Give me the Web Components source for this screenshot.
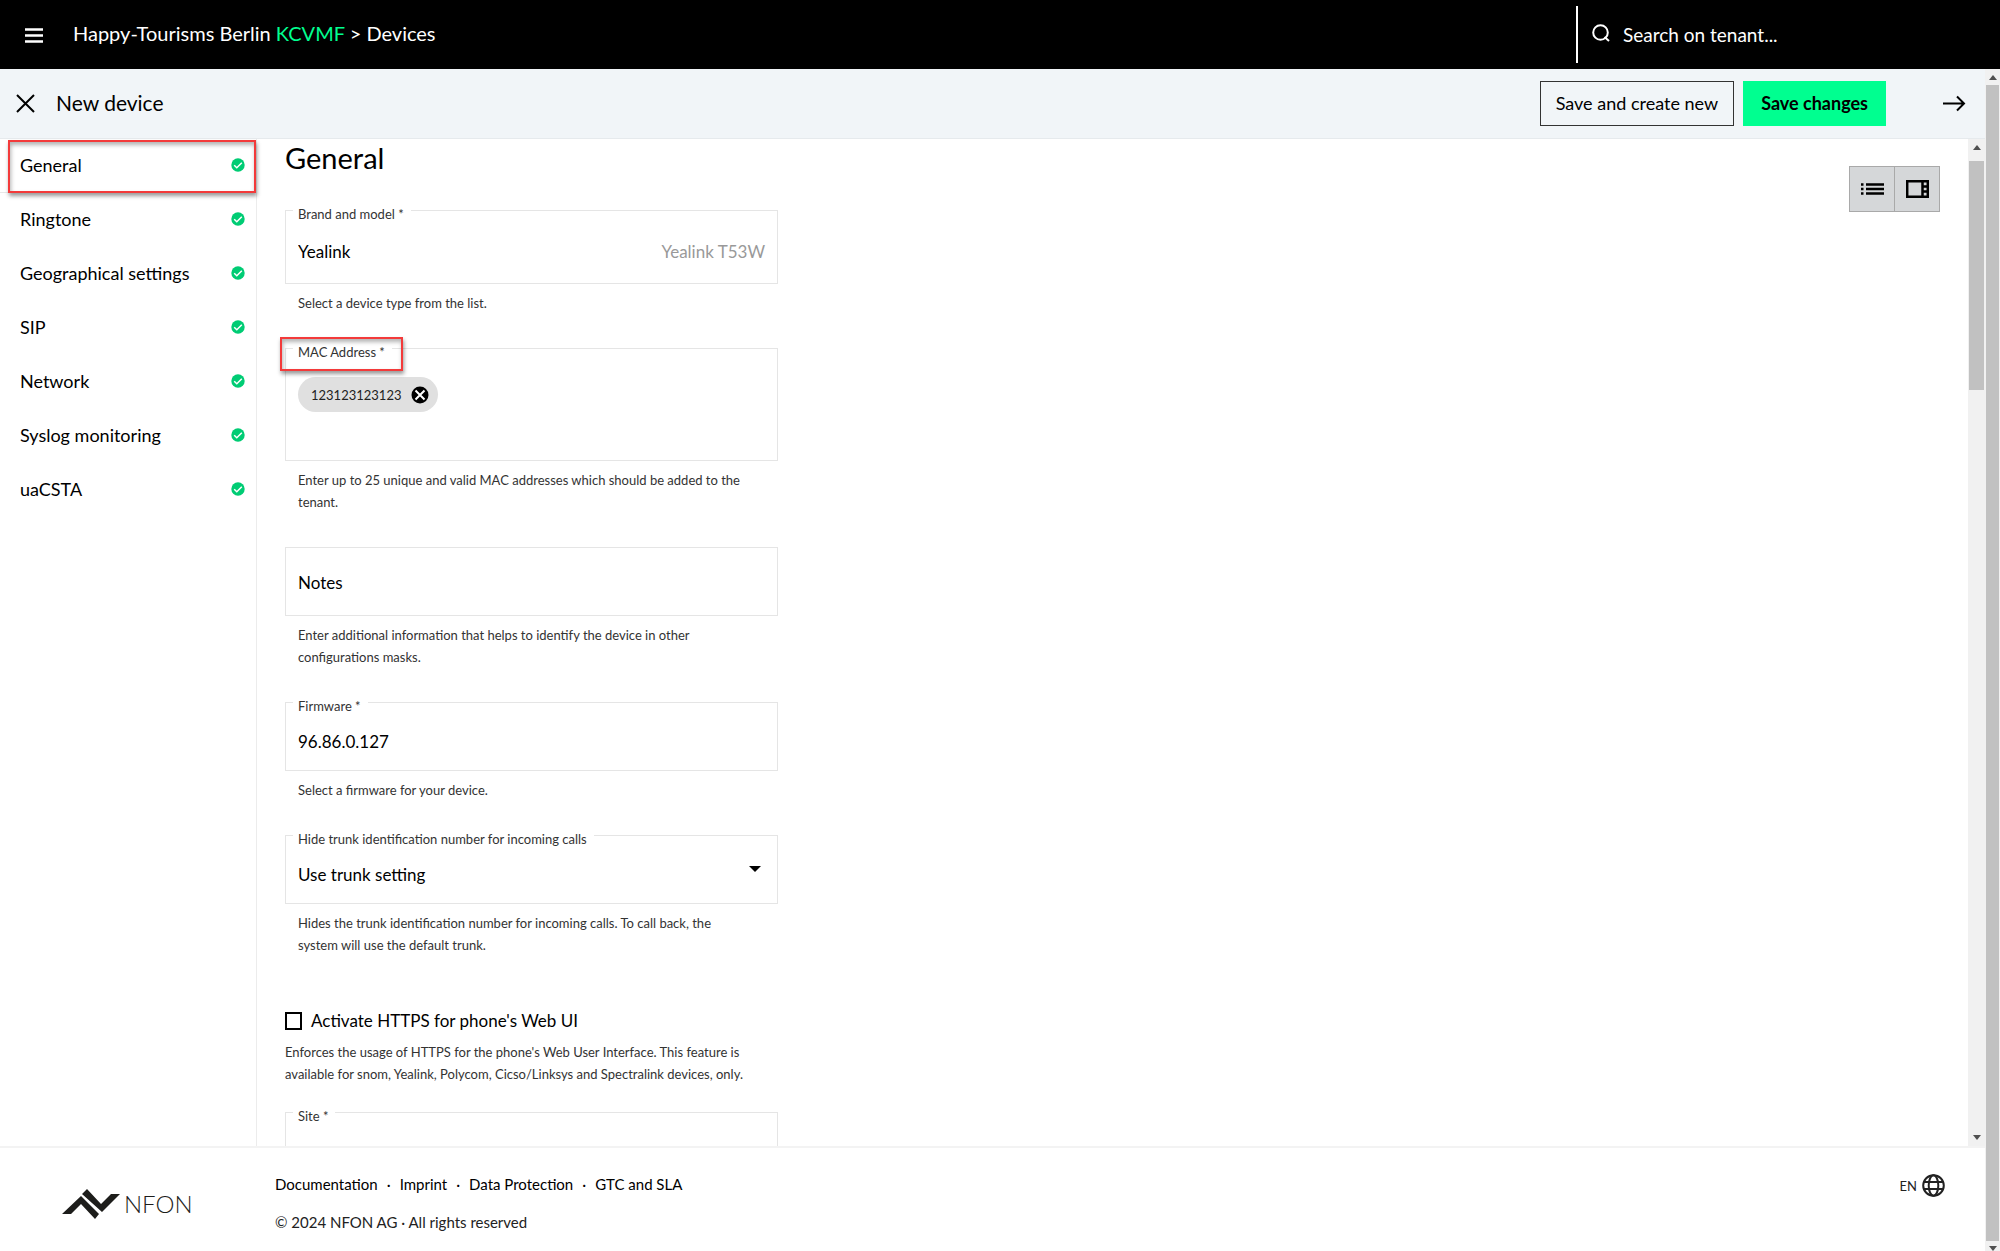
<!DOCTYPE html>
<html lang="en">
<head>
<meta charset="utf-8">
<title>New device</title>
<style>
    body {
        margin: 0;
        font-family: Lato, "Open Sans", sans-serif;
        font-size: 17px;
        color: #000;
        background: #fff;
    }
</style>
</head>
<body>
<device-page></device-page>

<script>
class BaseElement extends HTMLElement {
    constructor() {
        super();
        this.attachShadow({mode: 'open'});
    }

    connectedCallback() {
        this.shadowRoot.innerHTML = `
            <style>
                * { box-sizing: border-box; }
                button { font: inherit; color: inherit; background: none; border: 0; padding: 0; cursor: pointer; }
                a { color: inherit; text-decoration: none; }
                svg { display: block; flex: none; }
            </style>
            ${this.template()}`;
    }

    attr(name) {
        return this.getAttribute(name) || '';
    }
}

class TopBar extends BaseElement {
    template() {
        return `
            <style>
                :host { display: flex; align-items: center; height: 69px; background: #000; color: #fff; flex: none; }
                .menu { margin: 2px 30px 0 25px; }
                h1 { flex: 1; margin: 0; padding-bottom: 3px; font-size: 20px; font-weight: 400; line-height: 28px; }
                h1 span { color: #00ff90; }
                .search { display: flex; align-items: center; gap: 13px; width: 424px; height: 57px; padding-left: 14px; border-left: 2px solid #fff; }
                .search svg { margin-bottom: 3px; }
                input { flex: 1; min-width: 0; font: inherit; font-size: 19px; color: #fff; background: none; border: 0; padding: 0; outline: none; }
                input::placeholder { color: #fff; opacity: 1; }
            </style>
            <button class="menu" aria-label="Menu">
                <svg width="18" height="15" viewBox="0 0 18 15"><path d="M0 1.500h18M0 7.500h18M0 13.500h18" stroke="#fff" stroke-width="2.500"/></svg>
            </button>
            <h1>Happy-Tourisms Berlin <span>KCVMF</span> &gt; Devices</h1>
            <div class="search">
                <svg width="18" height="18" viewBox="0 0 18 18" fill="none" stroke="#fff" stroke-width="2"><circle cx="8.5" cy="8.5" r="7.3"/><path d="M12.500 13l4.500 4"/></svg>
                <input type="search" aria-label="Search on tenant" placeholder="Search on tenant...">
            </div>`;
    }
}

class DeviceToolbar extends BaseElement {
    template() {
        return `
            <style>
                :host { display: flex; align-items: center; height: 70px; padding: 0 19px 0 16px; background: #f1f5f8; border-bottom: 1px solid #e6eaed; flex: none; }
                h2 { flex: 1; margin: 0 0 0 21px; padding-bottom: 3px; font-size: 21px; font-weight: 400; }
                .action { height: 45px; padding: 0 18px 2px; font-size: 18px; }
                .outline { border: 1px solid #333; padding: 0 15px 2px; margin-right: 9px; }
                .primary { background: #00ff90; font-weight: 700; margin-right: 57px; }
            </style>
            <button aria-label="Close">
                <svg width="19" height="19" viewBox="0 0 19 19"><path d="M1 1l17 17M18 1L1 18" stroke="#000" stroke-width="2"/></svg>
            </button>
            <h2>New device</h2>
            <button class="action outline">Save and create new</button>
            <button class="action primary">Save changes</button>
            <button aria-label="Next">
                <svg width="23" height="17" viewBox="0 0 23 17" fill="none" stroke="#000" stroke-width="2"><path d="M0 8.5h21M14 1.5l7 7-7 7"/></svg>
            </button>`;
    }
}

class NavItem extends BaseElement {
    template() {
        return `
            <style>
                :host { display: block; position: relative; font-size: 18px; }
                a { display: flex; align-items: center; justify-content: space-between; height: 54px; padding: 0 11px 2px 20px; }
                :host([marked]) a { border-bottom: 1px solid #e8e8e8; }
                :host([marked])::after {
                    content: "";
                    position: absolute;
                    inset: 1px 0 0 8px;
                    border: 2px solid #f33a3a;
                    box-shadow: 1px 3px 4px rgba(0, 0, 0, .4), inset 1px 3px 4px rgba(0, 0, 0, .3);
                    pointer-events: none;
                }
            </style>
            <a href="#"><slot></slot>
                <svg width="14" height="14" viewBox="0 0 14 14"><circle cx="7" cy="7" r="6.7" fill="#00cc74"/><path d="M3.2 7.2l2.6 2.5 5-5" fill="none" stroke="#fff" stroke-width="1.5"/></svg>
            </a>`;
    }
}

class SideNav extends BaseElement {
    template() {
        return `
            <style>
                :host { display: block; width: 257px; border-right: 1px solid #ececec; flex: none; }
            </style>
            <nav><slot></slot></nav>`;
    }
}

class FormField extends BaseElement {
    template() {
        const marked = this.hasAttribute('marked') ? ' class="marked"' : '';
        const resting = this.hasAttribute('resting');
        return `
            <style>
                :host { display: block; }
                .box { position: relative; display: flex; align-items: center; min-height: var(--box-height, 69px); padding: var(--box-top, 10px) 12px 0 12px; border: 1px solid #e5e5e5; }
                .box.resting { padding-top: 2px; }
                .box.chips { flex-wrap: wrap; align-content: flex-start; padding-top: 28px; }
                label { position: absolute; top: -8px; left: 7px; padding: 0 7px 0 5px; background: #fff; font-size: 13px; line-height: 22px; color: #333; }
                .resting label { position: static; padding: 0; font-size: 17px; color: #000; }
                .marked::after {
                    content: "";
                    position: absolute;
                    inset: -4px -11px -8px -13px;
                    border: 2px solid #f33a3a;
                    box-shadow: 1px 3px 4px rgba(0, 0, 0, .4), inset 1px 3px 4px rgba(0, 0, 0, .3);
                    pointer-events: none;
                }
                input, select { flex: 1; min-width: 0; width: 100%; font: inherit; color: #000; background: none; border: 0; padding: 0; outline: none; appearance: none; }
                .chips input { flex: 1 0 100%; }
                .arrow { margin: -12px 4px 0 0; pointer-events: none; }
                p { margin: 8px 30px 0 13px; font-size: 13px; line-height: 22px; color: #333; }
            </style>
            <div class="box${resting ? ' resting' : ''}${this.hasAttribute('chips') ? ' chips' : ''}">
                <label for="field"${marked}>${this.attr('label')}</label>
                <slot></slot>
                ${this.control()}
                <slot name="end"></slot>
            </div>
            ${this.attr('help') ? `<p>${this.attr('help')}</p>` : ''}`;
    }

    control() {
        return `<input id="field" type="text" value="${this.attr('value')}">`;
    }
}

class SelectField extends FormField {
    control() {
        return `
            <select id="field"><option>${this.attr('value')}</option></select>
            <svg class="arrow" width="12" height="6" viewBox="0 0 12 6"><path d="M0 0h12L6 6z"/></svg>`;
    }
}

class MacChip extends BaseElement {
    template() {
        return `
            <style>
                :host { display: inline-flex; align-items: center; gap: 10px; height: 35px; padding: 0 9px 0 13px; border-radius: 18px; background: #e0e0e0; color: #222; font-size: 13px; }
            </style>
            <slot></slot>
            <button aria-label="Remove">
                <svg width="18" height="18" viewBox="0 0 18 18"><circle cx="9" cy="9" r="8.5"/><path d="M4.5 4.5l9 9M13.5 4.5l-9 9" stroke="#fff" stroke-width="2"/></svg>
            </button>`;
    }
}

class CheckField extends BaseElement {
    template() {
        return `
            <style>
                :host { display: block; }
                .row { display: flex; align-items: center; gap: 9px; line-height: 22px; }
                input { appearance: none; width: 17px; height: 18px; margin: 0; border: 2px solid #000; }
                p { margin: 9px 0 0; font-size: 13px; line-height: 22px; color: #333; }
            </style>
            <div class="row">
                <input type="checkbox" id="field">
                <label for="field">${this.attr('label')}</label>
            </div>
            <p>${this.attr('help')}</p>`;
    }
}

class ViewToggle extends BaseElement {
    template() {
        return `
            <style>
                :host { display: flex; }
                button { display: grid; place-items: center; width: 46px; height: 46px; background: #d5d7d9; border: 1px solid #a9a9a9; }
                button + button { margin-left: -1px; }
            </style>
            <button aria-label="List view">
                <svg width="23" height="14" viewBox="0 0 23 14" stroke="#000" stroke-width="2.500"><path d="M5 2.500h18M5 7h18M5 11.500h18M0 2.500h2.500M0 7h2.500M0 11.500h2.500"/></svg>
            </button>
            <button aria-label="Panel view">
                <svg width="23" height="18" viewBox="0 0 23 18" fill="none" stroke="#000" stroke-width="2.500"><path d="M1.200 1.200h20.600v15.600H1.200zM16.500 1v16M16.500 6.500h5M16.500 11.500h5"/></svg>
            </button>`;
    }
}

class ScrollRail extends BaseElement {
    template() {
        return `
            <style>
                :host { display: flex; flex-direction: column; align-items: center; width: var(--rail, 17px); background: #f1f1f1; flex: none; overflow: hidden; }
                .up { margin: 6px 0 var(--thumb-gap, 5px); }
                .down { margin: 5px 0 var(--rail-end, 6px); }
                .thumb { flex: 0 1 var(--thumb, 100%); width: calc(100% - 2px); background: #c1c1c1; }
                .rest { flex: 1 0 0px; }
            </style>
            <svg class="up" width="8" height="5" viewBox="0 0 8 5"><path d="M0 5h8L4 0z" fill="#505050"/></svg>
            <div class="thumb"></div>
            <div class="rest"></div>
            <svg class="down" width="8" height="5" viewBox="0 0 8 5"><path d="M0 0h8L4 5z" fill="#505050"/></svg>`;
    }
}

class PageFooter extends BaseElement {
    template() {
        return `
            <style>
                :host { display: flex; align-items: flex-start; height: 105px; padding: 25px 40px 0 62px; border-top: 2px solid #f3f3f3; font-size: 15px; flex: none; }
                .logo { display: flex; align-items: center; gap: 4px; width: 213px; margin-top: 16px; font-size: 24px; line-height: 30px; font-weight: 300; color: #1d1d1b; }
                .links { flex: 1; line-height: 22px; }
                .links div { display: flex; gap: 9px; }
                p { margin: 16px 0 0; color: #222; }
                .lang { display: flex; align-items: center; gap: 5px; margin-top: 1px; font-size: 13px; color: #222; }
            </style>
            <div class="logo">
                <svg width="58" height="30" viewBox="0 0 58 30" fill="#1d1d1b"><path d="M0 25L19 7l18 18-4 5L19 15 9 25zM20 5l5-5 14 15L49 5h9L40 23z"/></svg>
                NFON
            </div>
            <div class="links">
                <div><a href="#">Documentation</a><span>·</span><a href="#">Imprint</a><span>·</span><a href="#">Data Protection</a><span>·</span><a href="#">GTC and SLA</a></div>
                <p>© 2024 NFON AG · All rights reserved</p>
            </div>
            <button class="lang">EN
                <svg width="23" height="23" viewBox="0 0 23 23" fill="none" stroke="#222" stroke-width="2"><circle cx="11.500" cy="11.500" r="10.300"/><ellipse cx="11.500" cy="11.500" rx="4.800" ry="10.300"/><path d="M2 8h19M2 15h19"/></svg>
            </button>`;
    }
}

class DevicePage extends BaseElement {
    template() {
        return `
            <style>
                :host { display: flex; flex-direction: column; height: 100vh; overflow: hidden; }
                .window { display: flex; flex: 1; min-height: 0; }
                .page { display: flex; flex-direction: column; flex: 1; min-width: 0; }
                .content { display: flex; flex: 1; min-height: 0; }
                main { display: flex; justify-content: space-between; align-items: flex-start; flex: 1; min-width: 0; height: 100%; padding: 0 28px; overflow: hidden; }
                form { display: flex; flex-direction: column; gap: 34px; width: 493px; }
                h2 { margin: 0; font-size: 29px; line-height: 37px; font-weight: 400; }
                view-toggle { margin-top: 27px; }
                .model { color: #999; }
                .brand { --box-height: 74px; --box-top: 8px; }
                .mac { --box-height: 113px; }
                check-field { margin: 20px 0 -7px; }
                .site { --box-top: 8px; }
                .site svg { margin-right: 5px; }
                .outer { --rail: 15px; --rail-end: 0px; }
                .inner { --thumb: 229px; --thumb-gap: 11px; }
            </style>
            <top-bar></top-bar>
            <div class="window">
                <div class="page">
                    <device-toolbar></device-toolbar>
                    <div class="content">
                        <side-nav>
                            <nav-item marked>General</nav-item>
                            <nav-item>Ringtone</nav-item>
                            <nav-item>Geographical settings</nav-item>
                            <nav-item>SIP</nav-item>
                            <nav-item>Network</nav-item>
                            <nav-item>Syslog monitoring</nav-item>
                            <nav-item>uaCSTA</nav-item>
                        </side-nav>
                        <main>
                            <form>
                                <h2>General</h2>
                                <form-field class="brand" label="Brand and model *" value="Yealink" help="Select a device type from the list.">
                                    <span slot="end" class="model">Yealink T53W</span>
                                </form-field>
                                <form-field class="mac" chips marked label="MAC Address *" help="Enter up to 25 unique and valid MAC addresses which should be added to the tenant.">
                                    <mac-chip>123123123123</mac-chip>
                                </form-field>
                                <form-field resting label="Notes" help="Enter additional information that helps to identify the device in other configurations masks."></form-field>
                                <form-field label="Firmware *" value="96.86.0.127" help="Select a firmware for your device."></form-field>
                                <select-field label="Hide trunk identification number for incoming calls" value="Use trunk setting" help="Hides the trunk identification number for incoming calls. To call back, the system will use the default trunk."></select-field>
                                <check-field label="Activate HTTPS for phone's Web UI" help="Enforces the usage of HTTPS for the phone's Web User Interface. This feature is available for snom, Yealink, Polycom, Cicso/Linksys and Spectralink devices, only."></check-field>
                                <form-field class="site" label="Site *">
                                    <svg slot="end" width="16" height="10" viewBox="0 0 16 10" fill="none" stroke="#999" stroke-width="2"><circle cx="3.500" cy="4" r="3"/><circle cx="12.500" cy="4" r="3"/></svg>
                                </form-field>
                            </form>
                            <view-toggle></view-toggle>
                        </main>
                        <scroll-rail class="inner"></scroll-rail>
                    </div>
                    <page-footer></page-footer>
                </div>
                <scroll-rail class="outer"></scroll-rail>
            </div>`;
    }
}

customElements.define('top-bar', TopBar);
customElements.define('device-toolbar', DeviceToolbar);
customElements.define('nav-item', NavItem);
customElements.define('side-nav', SideNav);
customElements.define('form-field', FormField);
customElements.define('select-field', SelectField);
customElements.define('mac-chip', MacChip);
customElements.define('check-field', CheckField);
customElements.define('view-toggle', ViewToggle);
customElements.define('scroll-rail', ScrollRail);
customElements.define('page-footer', PageFooter);
customElements.define('device-page', DevicePage);
</script>
</body>
</html>
